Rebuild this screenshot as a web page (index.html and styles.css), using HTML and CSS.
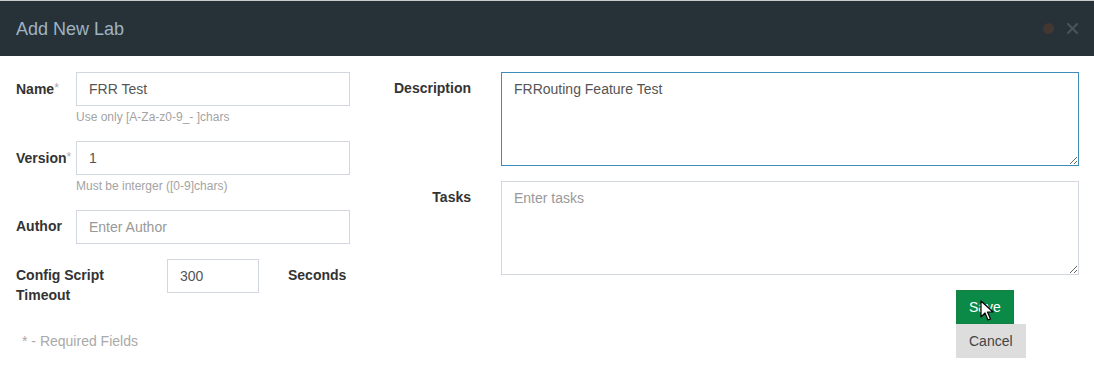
FILE: index.html
```html
<!DOCTYPE html>
<html lang="en">
<head>
<meta charset="utf-8">
<title>Add New Lab</title>
<link rel="stylesheet" href="styles.css">
</head>
<body>
<div class="backdrop-strip"></div>
<div class="modal">
  <header class="modal-header">
    <h4 class="modal-title">Add New Lab</h4>
    <div class="header-tools">
      <span class="dot"></span>
      <svg class="close" width="11" height="11" viewBox="0 0 11 11"><path d="M1 1 L10 10 M10 1 L1 10" stroke="#48545b" stroke-width="2" stroke-linecap="square"/></svg>
    </div>
  </header>
  <div class="modal-body">
    <div class="col-left">
      <div class="field-grid">
        <label class="lbl">Name<span class="req">*</span></label>
        <input class="ctl" type="text" value="FRR Test">
        <span class="help">Use only [A-Za-z0-9_- ]chars</span>

        <label class="lbl">Version<span class="req">*</span></label>
        <input class="ctl" type="text" value="1">
        <span class="help">Must be interger ([0-9]chars)</span>

        <label class="lbl">Author</label>
        <input class="ctl" type="text" placeholder="Enter Author">
      </div>
      <div class="timeout-row">
        <label class="lbl timeout-lbl">Config Script Timeout</label>
        <input class="ctl timeout-input" type="text" value="300">
        <span class="lbl unit">Seconds</span>
      </div>
      <p class="required-note">* - Required Fields</p>
    </div>
    <div class="col-right">
      <div class="area-grid">
        <label class="lbl rlbl">Description</label>
        <textarea class="ctl area focused">FRRouting Feature Test</textarea>
        <label class="lbl rlbl">Tasks</label>
        <textarea class="ctl area" placeholder="Enter tasks"></textarea>
        <div class="actions">
          <button class="btn btn-save" type="button">Save</button>
          <button class="btn btn-cancel" type="button">Cancel</button>
          <svg class="cursor" width="14" height="22" viewBox="0 0 14 22"><path d="M1 1 L1 17 L5 13 L8 20 L10.5 19 L7.5 12 L13 12 Z" fill="#fff" stroke="#000" stroke-width="1.2" stroke-linejoin="round"/></svg>
        </div>
      </div>
    </div>
  </div>
</div>
</body>
</html>
```
FILE: styles.css
```css
* { box-sizing: border-box; }
html, body {
  margin: 0;
  padding: 0;
  background: #fff;
  font-family: "Liberation Sans", Arial, sans-serif;
  font-size: 14px;
  color: #333;
}
.backdrop-strip {
  height: 1px;
  background: #c9cbcc;
}
.modal-header {
  height: 55px;
  background: #263238;
  display: flex;
  align-items: center;
  justify-content: space-between;
  padding: 0 16px;
}
.modal-title {
  margin: 0;
  font-size: 18px;
  font-weight: normal;
  color: #9fb2c2;
  line-height: 1;
}
.header-tools {
  display: flex;
  align-items: center;
  gap: 13px;
  margin-right: 0;
}
.dot {
  width: 11px;
  height: 11px;
  border-radius: 50%;
  background: #443631;
}
.close { display: block; }
.modal-body {
  display: flex;
  gap: 30px;
  padding: 16px 15px 0 16px;
}
.col-left { width: 334px; }
.col-right { flex: 1; }
.field-grid {
  display: grid;
  grid-template-columns: 60px 274px;
  align-items: start;
}
.lbl {
  font-weight: bold;
  line-height: 20px;
  padding-top: 6px;
  color: #333;
}
.req {
  color: #a9a9a9;
  font-weight: normal;
  font-size: 12px;
  vertical-align: 2px;
}
.ctl {
  font-family: inherit;
  font-size: 14px;
  color: #555;
  border: 1px solid #d2d6de;
  padding: 6px 12px;
  height: 34px;
  background: #fff;
  outline: none;
  width: 100%;
}
.ctl::placeholder { color: #999; }
.help {
  grid-column: 2;
  font-size: 12px;
  color: #a3a3a3;
  line-height: 17px;
  margin: 3px 0 15px;
}
.timeout-row {
  display: flex;
  align-items: flex-start;
  margin-top: 15px;
}
.timeout-lbl {
  width: 136px;
  margin-right: 15px;
}
.timeout-input { width: 92px; }
.unit { margin-left: 29px; }
.required-note {
  margin: 26px 0 0;
  padding-left: 6px;
  color: #a9a9a9;
  line-height: 20px;
}
.area-grid {
  display: grid;
  grid-template-columns: 91px 1fr;
  column-gap: 30px;
  row-gap: 15px;
  align-items: start;
}
.rlbl { text-align: right; }
.area {
  height: 94px;
  resize: vertical;
  line-height: 20px;
}
.area.focused { border-color: #3c8dbc; }
.actions {
  grid-column: 2;
  position: relative;
  display: flex;
  flex-direction: column;
  align-items: flex-start;
  padding-left: 455px;
}
.btn {
  font-family: inherit;
  font-size: 14px;
  line-height: 20px;
  padding: 6px 12px;
  border: 1px solid transparent;
  border-radius: 0;
}
.btn-save {
  background: #0b8a47;
  border-color: #15803f;
  color: #fff;
}
.btn-cancel {
  background: #dddddd;
  color: #444;
  border-color: #dddddd;
}
.cursor {
  position: absolute;
  left: 479px;
  top: 10px;
}
```
